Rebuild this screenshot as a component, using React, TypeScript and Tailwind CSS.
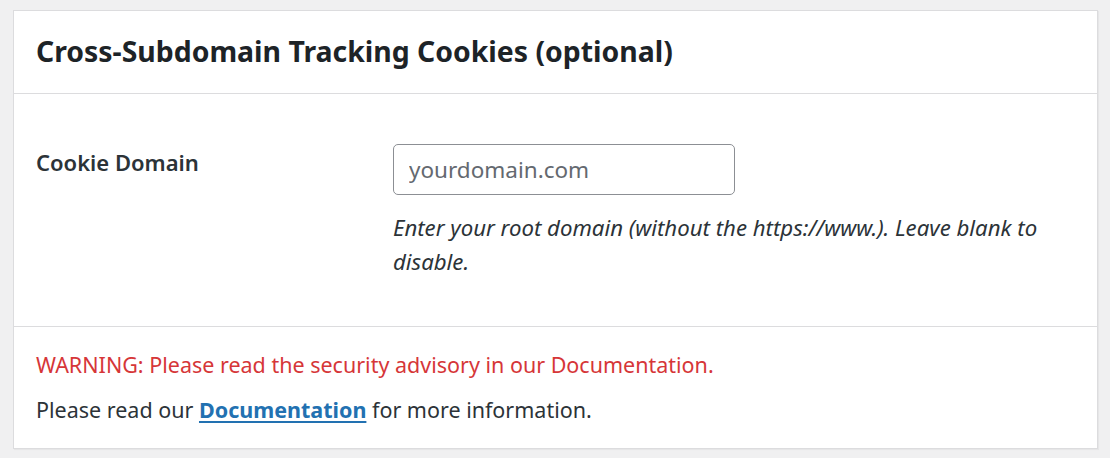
export default function App() {
  return (
    <div className="min-h-screen bg-[#f0f0f1] pt-[10px] pl-[13px] pr-[12px] font-['Noto_Sans',sans-serif] text-[#1d2327]">
      <div className="w-[1085px] border border-[#dcdcde] bg-white shadow-[1px_1px_1px_rgba(0,0,0,0.04)]">
        <div className="h-[83px] border-b border-[#dcdcde] px-[22px] flex items-center">
          <h2 className="text-[28.4px] font-bold leading-none pb-[2px]">Cross-Subdomain Tracking Cookies (optional)</h2>
        </div>

        <div className="flex px-[22px] pt-[50px] pb-[40px] border-b border-[#dcdcde] h-[233px]">
          <div className="w-[357px] shrink-0 pt-[3px]">
            <label className="text-[22px] font-semibold text-[#2c3338] leading-[30px]">Cookie Domain</label>
          </div>
          <div className="flex-1 min-w-0">
            <input
              type="text"
              placeholder="yourdomain.com"
              className="w-[342px] h-[51px] rounded-[5px] border border-[#8c8f94] px-[15px] text-[22.5px] text-[#2c3338] placeholder:text-[#646970] outline-none"
            />
            <p className="mt-[16px] text-[22.2px] italic leading-[34px] text-[#2c3338] w-[670px]">
              Enter your root domain (without the https://www.). Leave blank to disable.
            </p>
          </div>
        </div>

        <div className="px-[22px] pt-[24px] pb-[22px] h-[121px]">
          <p className="text-[21.5px] leading-[28px] text-[#d63638]">WARNING: Please read the security advisory in our Documentation.</p>
          <p className="mt-[17px] text-[21.5px] leading-[28px] text-[#2c3338]">
            Please read our{" "}
            <a href="#" className="font-bold text-[#2271b1] underline underline-offset-[3px]">Documentation</a>{" "}
            for more information.
          </p>
        </div>
      </div>
    </div>
  );
}
